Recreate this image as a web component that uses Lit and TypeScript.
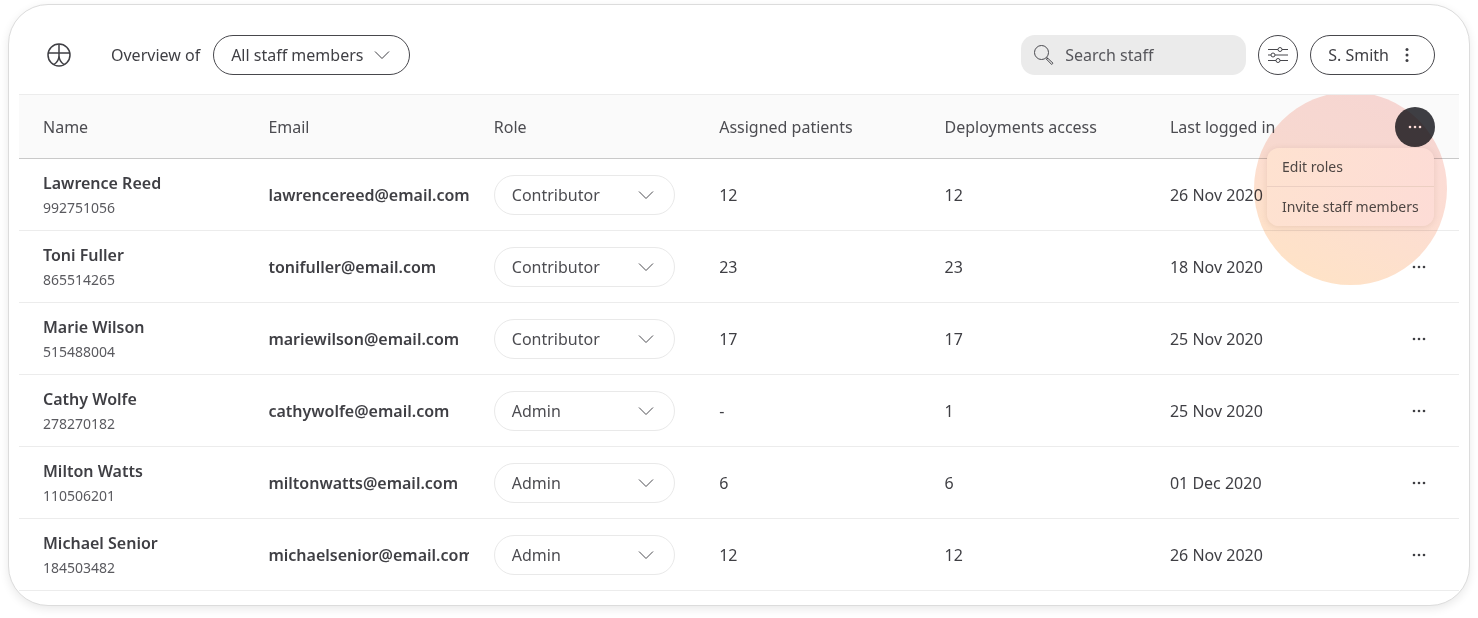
import { LitElement, html, css } from 'lit';
import { customElement } from 'lit/decorators.js';

interface StaffMember {
  name: string;
  id: string;
  email: string;
  role: string;
  patients: string;
  deployments: string;
  lastLogin: string;
}

const STAFF: StaffMember[] = [
  { name: 'Lawrence Reed', id: '992751056', email: 'lawrencereed@email.com', role: 'Contributor', patients: '12', deployments: '12', lastLogin: '26 Nov 2020' },
  { name: 'Toni Fuller', id: '865514265', email: 'tonifuller@email.com', role: 'Contributor', patients: '23', deployments: '23', lastLogin: '18 Nov 2020' },
  { name: 'Marie Wilson', id: '515488004', email: 'mariewilson@email.com', role: 'Contributor', patients: '17', deployments: '17', lastLogin: '25 Nov 2020' },
  { name: 'Cathy Wolfe', id: '278270182', email: 'cathywolfe@email.com', role: 'Admin', patients: '-', deployments: '1', lastLogin: '25 Nov 2020' },
  { name: 'Milton Watts', id: '110506201', email: 'miltonwatts@email.com', role: 'Admin', patients: '6', deployments: '6', lastLogin: '01 Dec 2020' },
  { name: 'Michael Senior', id: '184503482', email: 'michaelsenior@email.com', role: 'Admin', patients: '12', deployments: '12', lastLogin: '26 Nov 2020' },
];

const HEADERS = ['Name', 'Email', 'Role', 'Assigned patients', 'Deployments access', 'Last logged in'];

const chevron = html`<svg class="chevron" width="16" height="10" viewBox="0 0 16 10" fill="none" stroke="currentColor" stroke-width="1"><path d="M1 1.500l7 7 7-7" /></svg>`;

const dots = html`<svg width="14" height="4" viewBox="0 0 14 4" fill="currentColor"><circle cx="2" cy="2" r="1.300" /><circle cx="7" cy="2" r="1.300" /><circle cx="12" cy="2" r="1.300" /></svg>`;

@customElement('app-root')
export class AppRoot extends LitElement {
  static styles = css`
    :host {
      display: block;
      height: 618px;
      background: #fff;
      font-family: 'Noto Sans', sans-serif;
      font-size: 16px;
      color: #3f3f44;
      overflow: hidden;
    }

    .page {
      padding: 4px 8px 0;
    }

    .card {
      height: 602px;
      box-sizing: border-box;
      border: 1px solid #dcdcdc;
      border-radius: 40px;
      background: #fff;
      box-shadow: 0 3px 10px rgba(0, 0, 0, 0.09);
      padding: 0 10px;
    }

    /* Toolbar */
    .toolbar {
      height: 89px;
      box-sizing: border-box;
      display: flex;
      align-items: center;
      padding: 10px 24px 0 28px;
      gap: 12px;
    }

    .logo {
      margin-right: 28px;
      display: block;
    }

    .overview {
      margin-right: 1px;
    }

    .pill {
      height: 40px;
      box-sizing: border-box;
      border: 1px solid #47474c;
      border-radius: 20px;
      display: flex;
      align-items: center;
      padding: 0 19px 0 17px;
    }

    .pill .chevron {
      margin-left: 11px;
    }

    .spacer {
      flex: 1;
    }

    .search {
      width: 225px;
      height: 40px;
      box-sizing: border-box;
      background: #ebebeb;
      border-radius: 14px;
      display: flex;
      align-items: center;
      gap: 10px;
      padding-left: 12px;
      color: #56565b;
    }

    .icon-button {
      width: 40px;
      height: 40px;
      box-sizing: border-box;
      border: 1px solid #47474c;
      border-radius: 50%;
      display: flex;
      align-items: center;
      justify-content: center;
    }

    .pill.user {
      gap: 16px;
      padding: 0 25px 0 17px;
    }

    /* Table */
    .table {
      position: relative;
      overflow: hidden;
      border-top: 1px solid #ececec;
    }

    .row {
      display: grid;
      grid-template-columns: repeat(6, 225.4px) 1fr;
      align-items: center;
      padding-left: 24px;
      box-sizing: border-box;
    }

    .head {
      height: 64px;
      background: #fafafa;
      border-bottom: 1px solid #c9c9c9;
      color: #4c4c51;
    }

    .body {
      height: 72px;
      border-bottom: 1px solid #ececec;
    }

    .name {
      font-weight: 600;
      line-height: 22px;
    }

    .id {
      font-size: 14px;
      line-height: 20px;
      margin-top: 4px;
      color: #5a5a5f;
    }

    .email {
      font-weight: 600;
      overflow: hidden;
      white-space: nowrap;
      width: 201px;
    }

    .role {
      width: 181px;
      height: 40px;
      box-sizing: border-box;
      border: 1px solid #e9e9e9;
      border-radius: 20px;
      display: flex;
      align-items: center;
      justify-content: space-between;
      padding: 0 20px 0 17px;
      color: #4c4c51;
    }

    .more {
      display: flex;
      justify-content: flex-end;
      padding-right: 33px;
    }

    .more-active {
      display: flex;
      justify-content: flex-end;
      padding-right: 24px;
    }

    .dark-button {
      width: 40px;
      height: 40px;
      border-radius: 50%;
      background: #3e3e43;
      color: #fff;
      display: flex;
      align-items: center;
      justify-content: center;
    }

    /* Highlight over the open menu */
    .glow {
      position: absolute;
      left: 1235px;
      top: -3px;
      width: 193px;
      height: 193px;
      border-radius: 50%;
      background: linear-gradient(205deg, #fbdad9 0%, #fcddd3 45%, #ffe4c4 100%);
      mix-blend-mode: multiply;
      pointer-events: none;
    }

    .menu {
      position: absolute;
      left: 1248px;
      top: 53px;
      width: 167px;
      height: 78px;
      border-radius: 12px;
      background: linear-gradient(100deg, #fee2d0 0%, #fddcd6 100%);
      box-shadow: 0 1px 6px rgba(120, 70, 60, 0.14);
      font-size: 14px;
      color: #4e4643;
    }

    .menu-item {
      height: 38px;
      display: flex;
      align-items: center;
      padding: 0 0 1px 15px;
      box-sizing: border-box;
    }

    .menu-item + .menu-item {
      height: 40px;
      border-top: 1px solid #eccfc2;
    }
  `;

  render() {
    return html`
      <div class="page">
        <div class="card">
          <div class="toolbar">
            <svg class="logo" width="24" height="24" viewBox="0 0 24 24" fill="none" stroke="#3f3f44" stroke-width="1.500">
              <circle cx="12" cy="12" r="11" />
              <path d="M12 1v12M1.800 10h20.400M12 12.500c0 4-2 7-5 9M12 12.500c0 4 2 7 5 9" />
            </svg>
            <span class="overview">Overview of</span>
            <div class="pill">All staff members ${chevron}</div>
            <div class="spacer"></div>
            <div class="search">
              <svg width="22" height="22" viewBox="0 0 22 22" fill="none" stroke="#4a4a4f" stroke-width="1">
                <circle cx="8.500" cy="8.500" r="7" />
                <path d="M13.500 13.500l1.500 1.500M14.500 14l5.500 5.200-1.300 1.300-5.400-5.500z" />
              </svg>
              <span>Search staff</span>
            </div>
            <div class="icon-button">
              <svg width="22" height="16" viewBox="0 0 22 16" fill="none" stroke="#47474c" stroke-width="1">
                <path d="M1 2.500h10M15 2.500h6M1 8h3M8 8h13M1 13.500h8M13 13.500h8" />
                <circle cx="13" cy="2.500" r="2" />
                <circle cx="6" cy="8" r="2" />
                <circle cx="11" cy="13.500" r="2" />
              </svg>
            </div>
            <div class="pill user">
              S. Smith
              <svg width="4" height="16" viewBox="0 0 4 16" fill="#3f3f44"><circle cx="2" cy="2.500" r="1.500" /><circle cx="2" cy="8" r="1.500" /><circle cx="2" cy="13.500" r="1.500" /></svg>
            </div>
          </div>

          <div class="table">
            <div class="row head">
              ${HEADERS.map((h) => html`<div>${h}</div>`)}
              <div class="more-active"><div class="dark-button">${dots}</div></div>
            </div>
            ${STAFF.map(
              (s) => html`
                <div class="row body">
                  <div>
                    <div class="name">${s.name}</div>
                    <div class="id">${s.id}</div>
                  </div>
                  <div class="email">${s.email}</div>
                  <div><div class="role">${s.role} ${chevron}</div></div>
                  <div>${s.patients}</div>
                  <div>${s.deployments}</div>
                  <div>${s.lastLogin}</div>
                  <div class="more">${dots}</div>
                </div>
              `
            )}
            <div class="glow"></div>
            <div class="menu">
              <div class="menu-item">Edit roles</div>
              <div class="menu-item">Invite staff members</div>
            </div>
          </div>
        </div>
      </div>
    `;
  }
}

declare global {
  interface HTMLElementTagNameMap {
    'app-root': AppRoot;
  }
}
